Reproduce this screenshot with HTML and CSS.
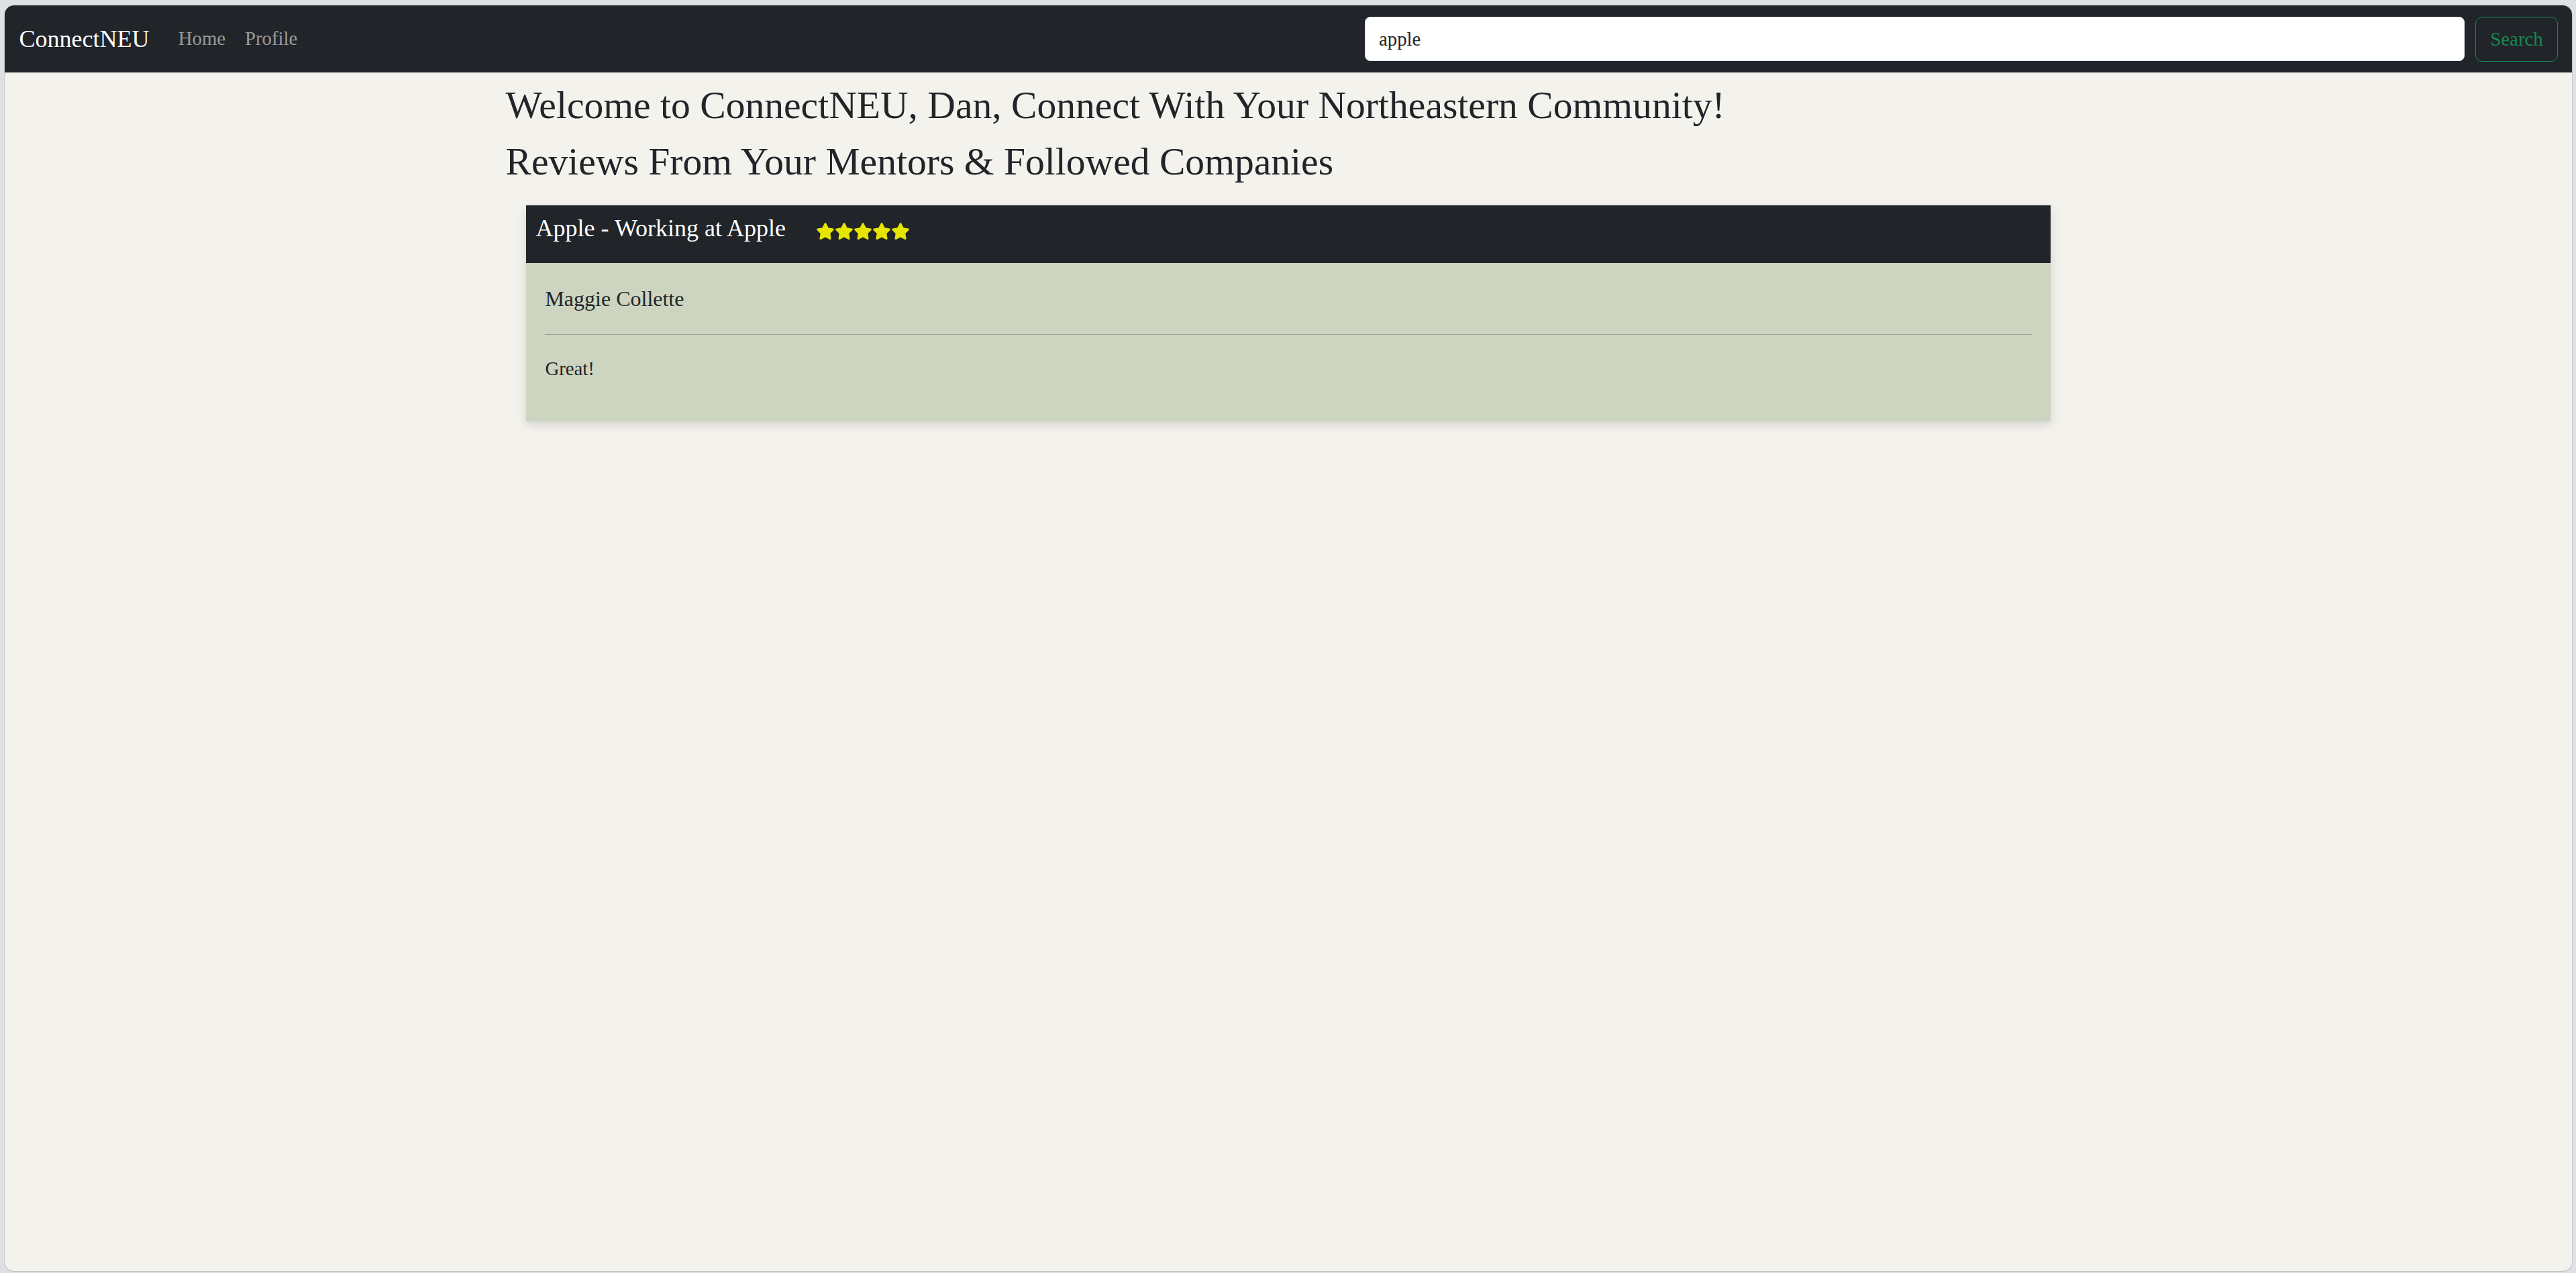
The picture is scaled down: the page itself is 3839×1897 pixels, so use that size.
FILE: index.html
```html
<!DOCTYPE html>
<html lang="en">
<head>
<meta charset="utf-8">
<title>ConnectNEU</title>
<link rel="stylesheet" href="styles.css">
</head>
<body>
<div class="window">
  <nav class="navbar">
    <a class="brand" href="#">ConnectNEU</a>
    <ul class="nav-links">
      <li><a href="#">Home</a></li>
      <li><a href="#">Profile</a></li>
    </ul>
    <form class="search">
      <input type="search" value="apple" class="search-input" aria-label="Search">
      <button type="button" class="search-btn">Search</button>
    </form>
  </nav>
  <main class="container">
    <h2 class="heading">Welcome to ConnectNEU, Dan, Connect With Your Northeastern Community!</h2>
    <h2 class="heading">Reviews From Your Mentors &amp; Followed Companies</h2>
    <div class="card">
      <div class="card-header">
        <h5 class="card-title">Apple - Working at Apple</h5>
        <div class="stars">
          <svg class="star" viewBox="0 0 576 512"><path d="M316.9 18C311.6 7 300.4 0 288.1 0s-23.4 7-28.8 18L195 150.3 51.4 171.5c-12 1.8-22 10.2-25.7 21.7s-.7 24.2 7.9 32.7L137.8 329 113.2 474.7c-2 12 3 24.2 12.9 31.3s23 8 33.8 2.3l128.3-68.5 128.3 68.5c10.8 5.7 23.9 4.9 33.8-2.3s14.9-19.3 12.9-31.3L438.5 329 542.7 225.9c8.6-8.5 11.7-21.2 7.9-32.7s-13.7-19.9-25.7-21.7L381.2 150.3 316.9 18z"/></svg>
          <svg class="star" viewBox="0 0 576 512"><path d="M316.9 18C311.6 7 300.4 0 288.1 0s-23.4 7-28.8 18L195 150.3 51.4 171.5c-12 1.8-22 10.2-25.7 21.7s-.7 24.2 7.9 32.7L137.8 329 113.2 474.7c-2 12 3 24.2 12.9 31.3s23 8 33.8 2.3l128.3-68.5 128.3 68.5c10.8 5.7 23.9 4.9 33.8-2.3s14.9-19.3 12.9-31.3L438.5 329 542.7 225.9c8.6-8.5 11.7-21.2 7.9-32.7s-13.7-19.9-25.7-21.7L381.2 150.3 316.9 18z"/></svg>
          <svg class="star" viewBox="0 0 576 512"><path d="M316.9 18C311.6 7 300.4 0 288.1 0s-23.4 7-28.8 18L195 150.3 51.4 171.5c-12 1.8-22 10.2-25.7 21.7s-.7 24.2 7.9 32.7L137.8 329 113.2 474.7c-2 12 3 24.2 12.9 31.3s23 8 33.8 2.3l128.3-68.5 128.3 68.5c10.8 5.7 23.9 4.9 33.8-2.3s14.9-19.3 12.9-31.3L438.5 329 542.7 225.9c8.6-8.5 11.7-21.2 7.9-32.7s-13.7-19.9-25.7-21.7L381.2 150.3 316.9 18z"/></svg>
          <svg class="star" viewBox="0 0 576 512"><path d="M316.9 18C311.6 7 300.4 0 288.1 0s-23.4 7-28.8 18L195 150.3 51.4 171.5c-12 1.8-22 10.2-25.7 21.7s-.7 24.2 7.9 32.7L137.8 329 113.2 474.7c-2 12 3 24.2 12.9 31.3s23 8 33.8 2.3l128.3-68.5 128.3 68.5c10.8 5.7 23.9 4.9 33.8-2.3s14.9-19.3 12.9-31.3L438.5 329 542.7 225.9c8.6-8.5 11.7-21.2 7.9-32.7s-13.7-19.9-25.7-21.7L381.2 150.3 316.9 18z"/></svg>
          <svg class="star" viewBox="0 0 576 512"><path d="M316.9 18C311.6 7 300.4 0 288.1 0s-23.4 7-28.8 18L195 150.3 51.4 171.5c-12 1.8-22 10.2-25.7 21.7s-.7 24.2 7.9 32.7L137.8 329 113.2 474.7c-2 12 3 24.2 12.9 31.3s23 8 33.8 2.3l128.3-68.5 128.3 68.5c10.8 5.7 23.9 4.9 33.8-2.3s14.9-19.3 12.9-31.3L438.5 329 542.7 225.9c8.6-8.5 11.7-21.2 7.9-32.7s-13.7-19.9-25.7-21.7L381.2 150.3 316.9 18z"/></svg>
        </div>
      </div>
      <div class="card-body">
        <p class="reviewer">Maggie Collette</p>
        <hr class="divider">
        <p class="review-text">Great!</p>
      </div>
    </div>
  </main>
</div>
</body>
</html>
```

FILE: styles.css
```css
* {
  box-sizing: border-box;
}

html,
body {
  margin: 0;
  height: 100%;
}

body {
  background: #dfe0e4;
  padding: 8px 6px 3px 7px;
  font-family: "Liberation Serif", "Times New Roman", serif;
  color: #212529;
}

.window {
  height: 100%;
  background: #f3f2ed;
  border-radius: 14px;
  overflow: hidden;
  display: flex;
  flex-direction: column;
  box-shadow: 0 0 0 1px rgba(0, 0, 0, 0.06), 0 1px 2px rgba(0, 0, 0, 0.12);
}

/* Navbar */
.navbar {
  flex: none;
  display: flex;
  align-items: center;
  height: 100px;
  padding: 0 21px 0 21.6px;
  background: #212529;
}

.brand {
  font-size: 36px;
  line-height: 54px;
  padding: 9px 0;
  margin-right: 28.8px;
  color: #fff;
  text-decoration: none;
  white-space: nowrap;
}

.nav-links {
  display: flex;
  list-style: none;
  margin: 0;
  padding: 0;
}

.nav-links a {
  display: block;
  padding: 14.4px;
  font-size: 28.8px;
  line-height: 43.2px;
  color: rgba(255, 255, 255, 0.55);
  text-decoration: none;
}

.search {
  margin: 0 0 0 auto;
  display: flex;
  align-items: center;
  gap: 16px;
}

.search-input {
  width: 1639px;
  height: 66px;
  padding: 0 20px;
  border: 1.8px solid #dee2e6;
  border-radius: 8px;
  background: #fff;
  font-family: "Liberation Serif", "Times New Roman", serif;
  font-size: 28.8px;
  color: #212529;
  outline: none;
  -webkit-appearance: none;
  appearance: none;
}

.search-btn {
  width: 123px;
  height: 67px;
  padding: 0;
  border: 1.8px solid #198754;
  border-radius: 10px;
  background: transparent;
  color: #198754;
  font-family: "Liberation Serif", "Times New Roman", serif;
  font-size: 28.8px;
}

/* Content */
.container {
  width: 2376px;
  margin: 0 auto;
  padding: 14px 21.6px;
}

.heading {
  margin: 0 0 14.4px;
  font-size: 57.6px;
  line-height: 1.2;
  font-weight: 400;
  color: #212529;
}

.card {
  margin: 31.5px 30px 0;
  box-shadow: 0 5px 14px rgba(0, 0, 0, 0.13);
}

.card-header {
  display: flex;
  align-items: flex-start;
  padding: 13px 15px 29.8px;
  background: #212529;
  color: #fff;
}

.card-title {
  margin: 0;
  font-size: 36px;
  line-height: 43.2px;
  font-weight: 400;
}

.stars {
  display: flex;
  margin: 13px 0 0 45px;
}

.star {
  width: 28px;
  height: 25px;
  fill: #e6e600;
}

.card-body {
  padding: 28.8px;
  background: #cdd5c0;
}

.reviewer {
  margin: 0;
  font-size: 32px;
  line-height: 48px;
}

.divider {
  margin: 28.8px 0;
  height: 0;
  border: 0;
  border-top: 1px solid #9ba395;
}

.review-text {
  margin: 0 0 28.8px;
  font-size: 28.8px;
  line-height: 43.2px;
}
```
